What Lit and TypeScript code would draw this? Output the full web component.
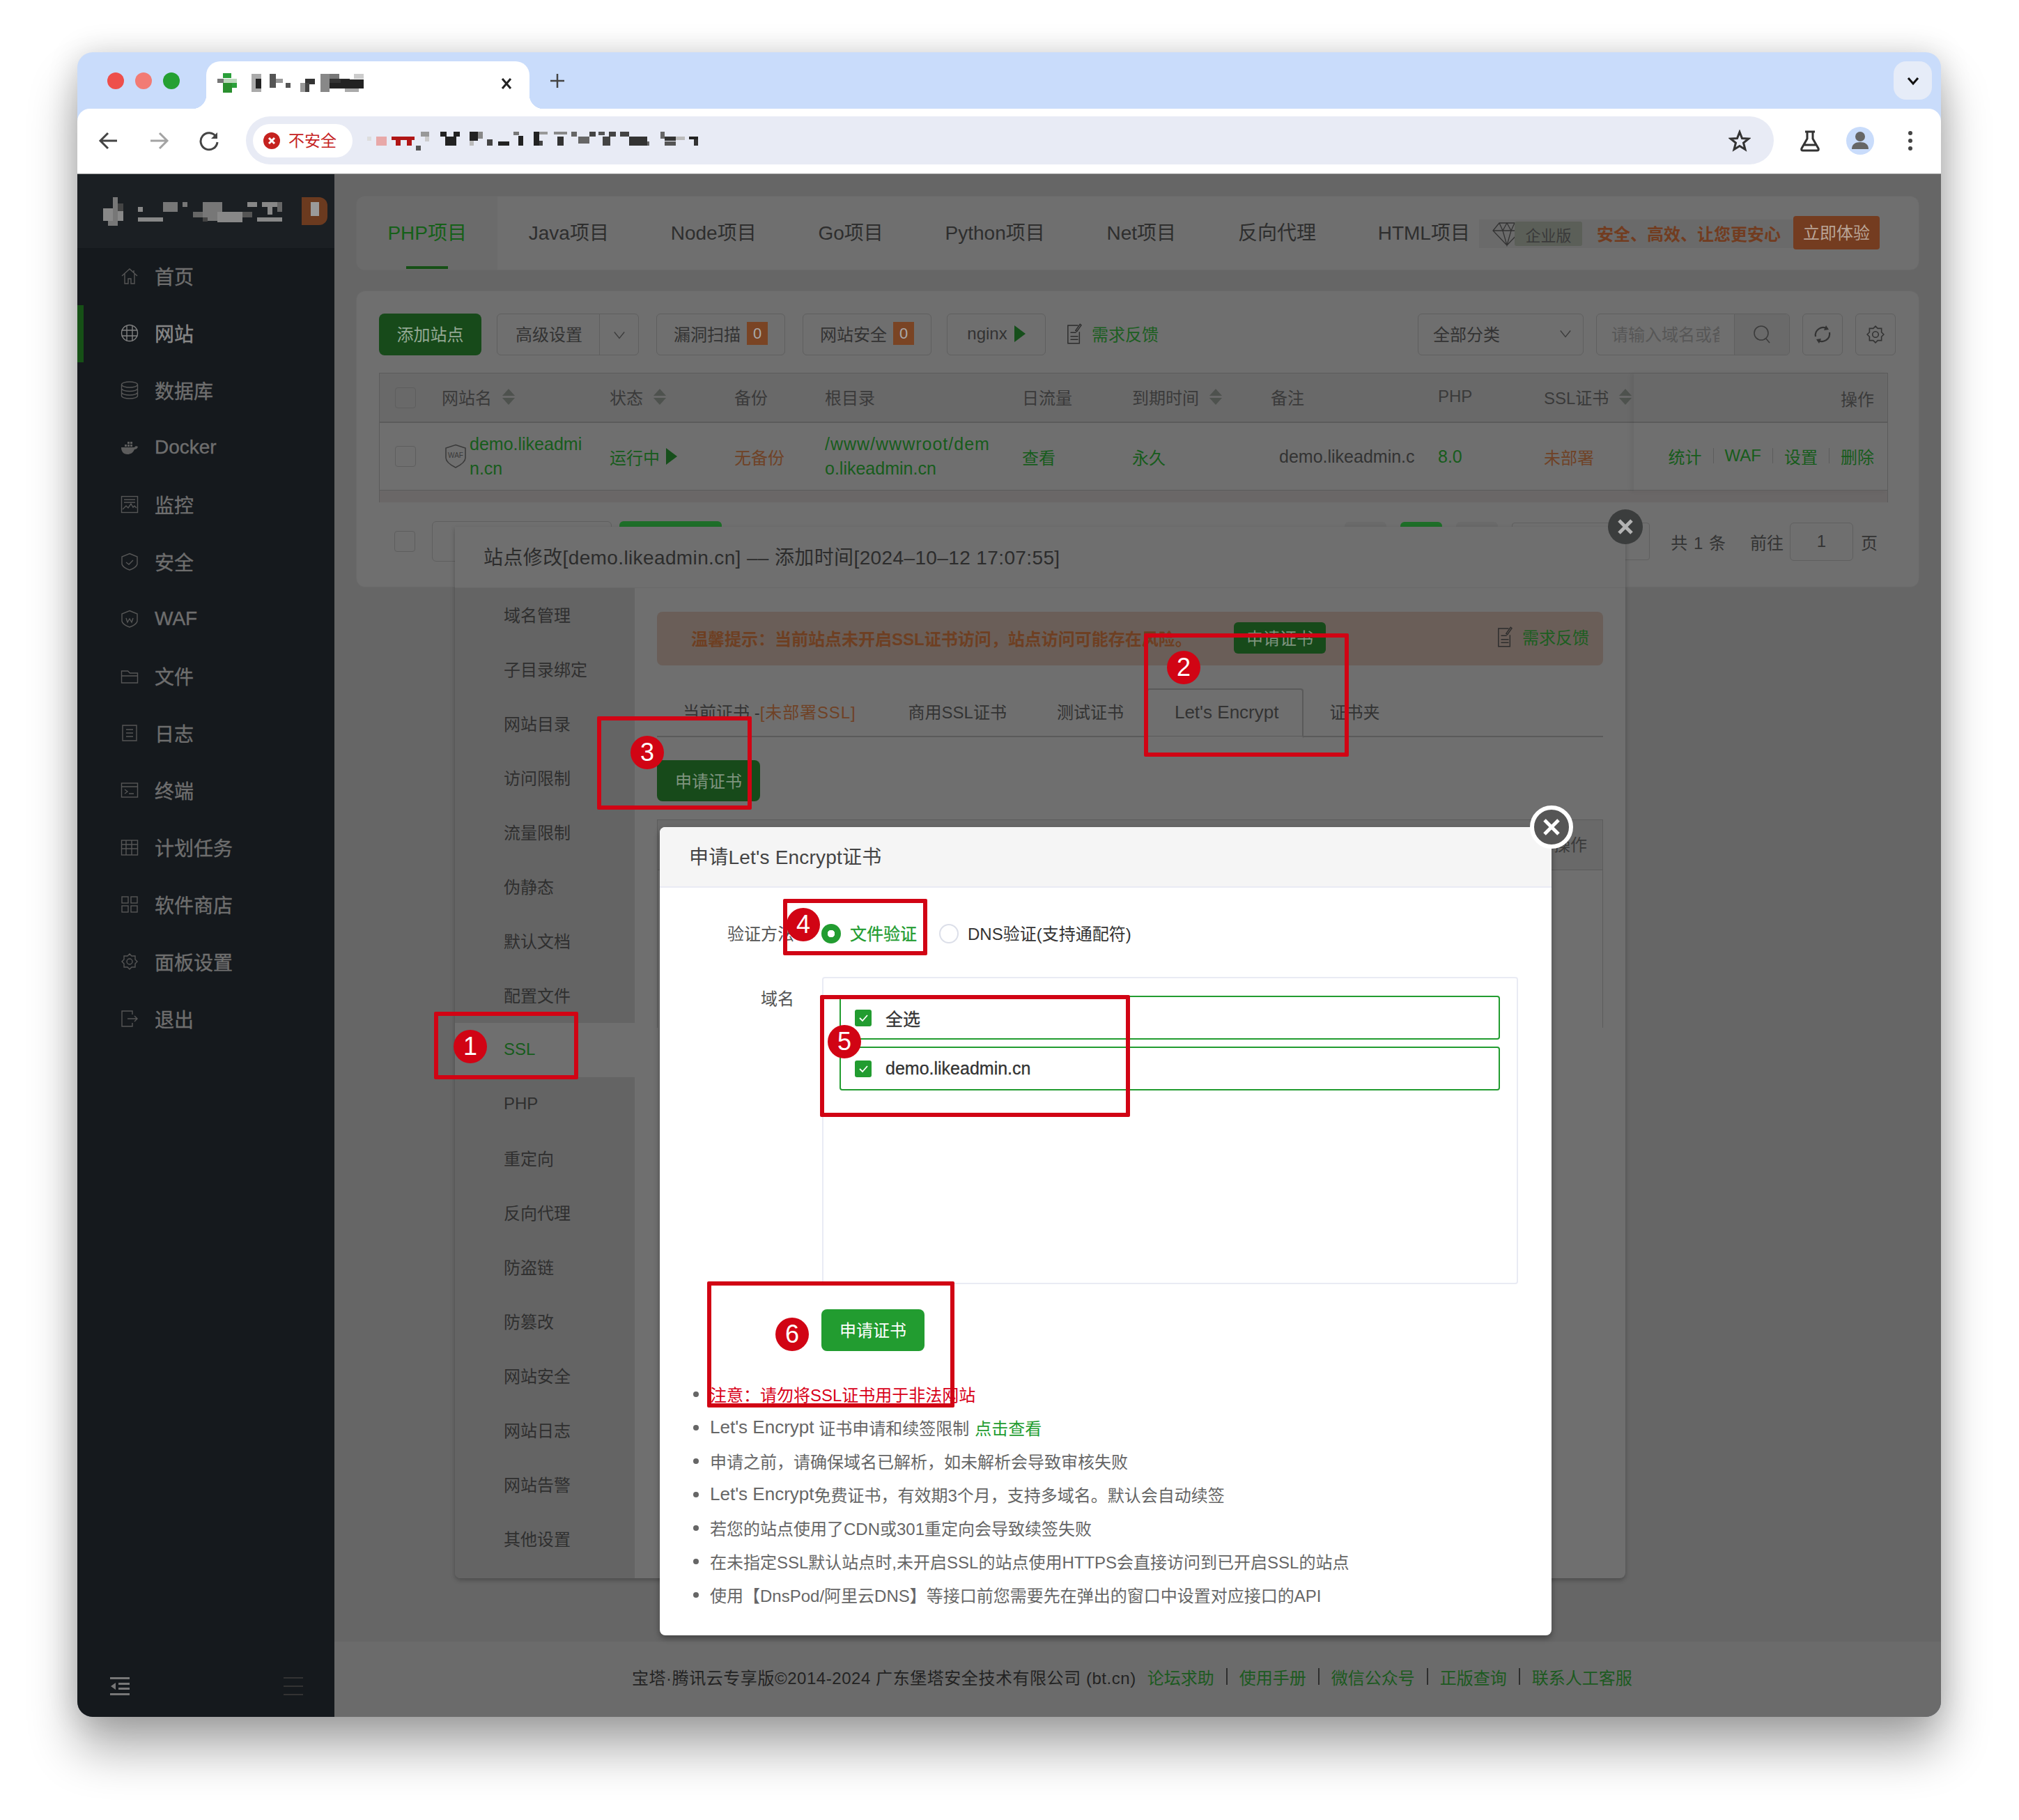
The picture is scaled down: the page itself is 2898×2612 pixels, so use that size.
import { LitElement, html, css, svg } from "lit";
import { customElement } from "lit/decorators.js";

type R = [number, number, number, number, string];
const mosaic = (vb: string, w: number, h: number, rects: R[], cls = "") => html`<svg class=${cls} width=${w} height=${h} viewBox=${vb} preserveAspectRatio="none" shape-rendering="crispEdges">${rects.map(
  (r) => svg`<rect x=${r[0]} y=${r[1]} width=${r[2]} height=${r[3]} fill=${r[4]}></rect>`
)}</svg>`;

const URL_R: R[] = [
  [670,408,10,20,"#ddd"],[690,408,24,40,"#e8a8a8"],[725,408,52,16,"#b01515"],[735,424,10,26,"#b01515"],[760,424,10,26,"#b01515"],[780,450,10,20,"#555"],
  [790,388,20,20,"#999"],[800,408,10,22,"#ccc"],[835,388,14,20,"#222"],[865,388,14,20,"#222"],[845,408,25,40,"#222"],[900,388,20,40,"#222"],[920,388,10,30,"#888"],[900,428,10,20,"#bbb"],
  [940,420,12,30,"#444"],[965,430,25,18,"#222"],[1000,388,12,15,"#777"],[1010,405,12,45,"#222"],[1045,388,12,60,"#222"],[1057,388,20,12,"#999"],[1057,428,8,20,"#444"],[1090,388,30,12,"#888"],
  [1098,410,14,40,"#333"],[1130,388,12,20,"#666"],[1145,410,25,30,"#666"],[1170,388,15,20,"#444"],[1190,388,15,15,"#555"],[1200,410,18,40,"#444"],[1215,388,15,20,"#444"],[1240,388,20,20,"#444"],
  [1260,408,40,40,"#333"],[1300,430,5,18,"#666"],[1330,388,10,30,"#666"],[1340,408,25,20,"#333"],[1365,408,20,15,"#bbb"],[1340,430,25,20,"#555"],[1395,408,20,12,"#222"],[1405,420,10,30,"#333"],
];
const TITLE_R: R[] = [
  [410,125,22,80,"#aaa"],[420,145,12,45,"#222"],[450,125,15,60,"#555"],[465,145,15,20,"#999"],[487,165,10,20,"#555"],[520,165,10,40,"#999"],[530,145,22,25,"#333"],[530,165,10,40,"#444"],
  [565,125,20,80,"#888"],[585,125,22,22,"#777"],[585,145,45,20,"#333"],[585,165,25,25,"#222"],[610,150,30,40,"#222"],[640,125,22,20,"#ccc"],[640,150,22,40,"#222"],[620,190,30,15,"#aaa"],
];
const FAV_R: R[] = [[345,125,18,20,"#2a9f3a"],[332,148,45,18,"#bcd8bc"],[332,148,15,18,"#777"],[345,168,20,42,"#2a8f2e"],[365,168,12,20,"#2aa03a"]];
const LOGO_R: R[] = [
  [135,105,80,50,"#888"],[175,60,20,115,"#777"],[155,155,40,20,"#777"],[195,85,20,30,"#444"],[275,100,20,20,"#888"],[275,140,100,18,"#888"],[375,80,60,40,"#777"],[455,80,20,20,"#777"],
  [495,120,40,20,"#666"],[535,80,80,75,"#777"],[595,120,100,40,"#888"],[695,120,40,20,"#555"],[715,80,40,20,"#888"],[775,80,60,20,"#888"],[835,80,20,40,"#666"],[795,100,20,30,"#888"],[755,140,100,18,"#888"],[535,140,20,18,"#444"],
];

const icons: Record<string, any> = {
  home: svg`<path d="M2 13 13 3l11 10M6 10v14h5v-7h4v7h5V10M19 5v4"/>`,
  globe: svg`<circle cx="13" cy="13" r="11.5"/><path d="M1.5 9h23M1.5 17h23M9 2v22M17 2v22"/>`,
  db: svg`<ellipse cx="13" cy="5" rx="11.5" ry="4"/><path d="M1.5 5v16c0 2.2 5 4 11.5 4s11.5-1.800 11.500-4V5M1.500 10.500c0 2.200 5 4 11.500 4s11.500-1.800 11.500-4M1.500 16c0 2.200 5 4 11.500 4s11.500-1.800 11.500-4"/>`,
  docker: svg`<g fill="#5c5c5c" stroke="none"><path d="M1 13h19c1-2 3-2 5-1-1 3-3 4-5 4-2 5-6 7-10 7-6 0-9-4-9-10z"/><path d="M6 9h3v3H6zM10 9h3v3h-3zM14 9h3v3h-3zM10 5h3v3h-3zM14 5h3v3h-3z"/></g>`,
  monitor: svg`<rect x="1.500" y="1.500" width="23" height="23"/><path d="M5 6h16M5 10h16M3 20l5-5 3 3 4-6 3 5 2-2 3 3"/>`,
  shield: svg`<path d="M13 1.500 24 6v10c0 4-6 7.500-11 9-5-1.500-11-5-11-9V6z"/><path d="M8 14l4 3 6-6"/>`,
  waf: svg`<path d="M13 1.500 24 6v10c0 4-6 7.500-11 9-5-1.500-11-5-11-9V6z"/><path d="M8 12l2 6 3-5 3 5 2-6"/>`,
  folder: svg`<path d="M1.500 6h9l3 3h11v14h-23zM1.500 13h23"/>`,
  log: svg`<path d="M3 2h20v22H3zM8 8h10M8 13h10M8 18h10"/>`,
  term: svg`<rect x="1.500" y="3" width="23" height="20"/><path d="M1.500 8h23M6 12l4 3-4 3M12 18h7"/>`,
  cal: svg`<rect x="1.500" y="3" width="23" height="21"/><path d="M1.500 9h23M8 3v21M16 3v21M1.500 15h23"/>`,
  apps: svg`<rect x="2" y="2" width="9" height="9"/><rect x="15" y="2" width="9" height="9"/><rect x="2" y="15" width="9" height="9"/><rect x="15" y="15" width="9" height="9"/>`,
  gear: svg`<path d="M13 2l3 3h5v5l3 3-3 3v5h-5l-3 3-3-3H5v-5l-3-3 3-3V5h5z"/><circle cx="13" cy="13" r="4"/>`,
  exit: svg`<path d="M17 7V2H2v22h15v-5M10 13h14M20 9l4 4-4 4"/>`,
};
const ic = (n: string, c = "ic") => html`<svg class=${c} viewBox="0 0 26 26" fill="none" stroke-width="1.400">${icons[n]}</svg>`;

const note = html`<svg class="note" viewBox="0 0 24 34" fill="none" stroke="#2d2d2d" stroke-width="1.600"><path d="M18 4H2v28h18V14M6 15h9M6 21h12M6 26h12"/><path d="M14 12 21 2l2 1.500-7 10z"/></svg>`;
const sort = html`<svg class="sort" viewBox="0 0 18 23"><path d="M9 0l9 10H0z" fill="#4e524e"/><path d="M9 23l9-10H0z" fill="#4e524e"/></svg>`;
const tri = html`<svg class="tri" viewBox="0 0 16 24"><path d="M0 0l16 12L0 24z" fill="#164f1b"/></svg>`;
const chev = html`<svg class="chev" viewBox="0 0 20 12" fill="none" stroke="#3c3c3c" stroke-width="1.500"><path d="M2 1l8 10 8-10"/></svg>`;

const NAV = ["首页","网站","数据库","Docker","监控","安全","WAF","文件","日志","终端","计划任务","软件商店","面板设置","退出"];
const NAVI = ["home","globe","db","docker","monitor","shield","waf","folder","log","term","cal","apps","gear","exit"];
const TABS = ["PHP项目","Java项目","Node项目","Go项目","Python项目","Net项目","反向代理","HTML项目"];
const SITE = ["域名管理","子目录绑定","网站目录","访问限制","流量限制","伪静态","默认文档","配置文件","SSL","PHP","重定向","反向代理","防盗链","防篡改","网站安全","网站日志","网站告警","其他设置"];
const BOXES = [[623,1452,207,97],[857,1028,222,134],[1124,1290,207,81],[1177,1428,445,175],[1642,909,294,177],[1015,1839,355,181]];
const DOTS: [string, number, number][] = [["1",675,1502],["3",929,1080],["4",1153,1327],["5",1212,1495],["2",1699,958],["6",1137,1915]];

@customElement("app-root")
export class AppRoot extends LitElement {
  static styles = css`
    :host { display: block; width: 2898px; height: 2612px; background: #fff; overflow: hidden; font-family: "Liberation Sans", "Noto Sans CJK SC", sans-serif; color: #333; box-sizing: border-box; padding: 75px 0 0 111px; }
    * { box-sizing: border-box; }
    .window { position: relative; width: 2675px; height: 2389px; border-radius: 22px; display: flex; flex-direction: column; background: #c9dcfb; box-shadow: 0 46px 70px rgba(0,0,0,.33), 0 0 44px rgba(0,0,0,.16); overflow: visible; }
    .strip { height: 81px; display: flex; align-items: center; padding-left: 43px; flex: none; }
    .light { width: 24px; height: 24px; border-radius: 50%; margin-right: 16px; flex: none; }
    .tab { position: relative; width: 464px; height: 68px; margin-left: 22px; align-self: flex-end; background: #fff; border-radius: 20px 20px 0 0; display: flex; align-items: center; padding: 0 0 5px 16px; flex: none; }
    .tab::before, .tab::after { content: ""; position: absolute; bottom: 0; width: 20px; height: 20px; }
    .tab::before { left: -20px; background: radial-gradient(circle at 0 0, transparent 20px, #fff 20.500px); }
    .tab::after { right: -20px; background: radial-gradient(circle at 100% 0, transparent 20px, #fff 20.500px); }
    .tab .t { margin-left: 20px; }
    .tab .x { margin-left: auto; margin-right: 24px; font-size: 0; }
    .plus { margin-left: 28px; }
    .drop { margin-left: auto; margin-right: 13px; width: 55px; height: 55px; border-radius: 18px; background: #e6ecf8; display: flex; align-items: center; justify-content: center; }
    .tools { height: 93px; flex: none; background: #fff; border-radius: 18px 18px 0 0; display: flex; align-items: center; padding: 0 0 2px 30px; }
    .tools > svg { flex: none; }
    .gap42 { margin-left: 42px; }
    .addr { margin-left: 38px; width: 2193px; height: 69px; border-radius: 35px; background: #e8ebf5; display: flex; align-items: center; padding: 0 33px 0 10px; flex: none; }
    .chip { width: 143px; height: 48px; border-radius: 24px; background: #fff; display: flex; align-items: center; gap: 12px; padding: 0 0 3px 15px; font-size: 23px; color: #c5221f; flex: none; }
    .chip svg { margin-top: 3px; flex: none; }
    .url { margin-left: 21px; }
    .star { margin-left: auto; }
    .gap37 { margin-left: 37px; }
    .body { flex: 1; display: flex; min-height: 0; background: #666; border-radius: 0 0 22px 22px; border-top: 1px solid #9a9a9a; }
    .side { width: 369px; flex: none; background: #15191d; border-radius: 0 0 0 22px; display: flex; flex-direction: column; }
    .logo { height: 106px; background: #1b1f23; display: flex; align-items: center; padding-left: 37px; flex: none; }
    .badge { margin-left: 28px; width: 37px; height: 40px; border-radius: 0 12px 12px 0; background: #6b3a1f; position: relative; display: flex; justify-content: center; align-items: flex-start; padding-top: 7px; }
    .badge i { display: block; width: 12px; height: 20px; background: #9a9a9a; }
    .item { height: 82px; display: flex; align-items: center; gap: 23px; padding: 0 0 3px 62px; font-size: 28px; color: #6e6e6e; -webkit-text-stroke: .4px #6e6e6e; flex: none; }
    .item.on { color: #868686; -webkit-text-stroke: .4px #868686; box-shadow: inset 9px 0 0 #165016; }
    .ic { width: 26px; height: 26px; stroke: #565656; flex: none; }
    .item.on .ic { stroke: #828282; }
    .foot { margin-top: auto; height: 88px; display: flex; align-items: center; justify-content: space-between; padding: 0 45px 0 47px; }
    .foot svg { width: 28px; height: 26px; }
    .main { flex: 1; min-width: 0; display: flex; flex-direction: column; padding: 32px 32px 0; }
    .card { background: #6f6f6f; border-radius: 12px; box-shadow: 0 0 0 1px #696969; }
    .tabs { height: 105px; display: flex; align-items: center; position: relative; flex: none; font-size: 28px; color: #2e2e2e; }
    .tabs .pt { position: relative; height: 100%; display: flex; align-items: center; padding: 0 44.4px 5px; flex: none; white-space: nowrap; }
    .tabs .pt.on { color: #156018; background: #6b6b6b; border-radius: 12px 0 0 12px; }
    .tabs .pt.on::after { content: ""; position: absolute; left: 71px; bottom: 1px; width: 60px; height: 4px; background: #165016; }
    .promo { position: absolute; left: 1611px; top: 33px; width: 452px; height: 41px; background: #6a6a6a; display: flex; align-items: center; }
    .dia { width: 42px; height: 36px; margin-left: 19px; flex: none; }
    .ent { margin-left: -10px; width: 97px; height: 35px; background: #5b5f58; color: #3a3a3a; font-size: 22px; display: flex; align-items: center; justify-content: center; border-radius: 3px; flex: none; }
    .safe { margin-left: 21px; font-size: 24px; font-weight: 700; color: #723c20; white-space: nowrap; padding-bottom: 3px; }
    .try { position: absolute; left: 2062px; top: 28px; width: 124px; height: 48px; border-radius: 4px; background: #743c20; color: #b9a497; font-size: 24px; display: flex; align-items: center; justify-content: center; padding-bottom: 3px; }
    .sites { margin-top: 31px; height: 424px; padding: 32px 33px 0 32px; flex: none; }
    .bar { display: flex; height: 60px; align-items: stretch; font-size: 24px; color: #333; }
    .btn { border: 1px solid #5f5f5f; border-radius: 6px; display: flex; align-items: center; justify-content: center; flex: none; white-space: nowrap; padding-bottom: 3px; }
    .prim { background: #174a1a; border: 0; color: #93a893; border-radius: 8px; }
    .bar > * + * { margin-left: 22px; }
    .w147 { width: 147px; } .w204 { width: 204px; justify-content: flex-start; padding-left: 26px; position: relative; }
    .w204 .split { position: absolute; left: 146px; top: 0; bottom: 0; border-left: 1px solid #5f5f5f; }
    .w204 .chev { position: absolute; left: 166px; top: 24px; }
    .chev { width: 18px; height: 12px; flex: none; }
    .bar > .m3 { margin-left: 25px; }
    .w185 { width: 185px; gap: 9px; }
    .num { width: 30px; height: 33px; background: #7a4424; color: #a9a9a9; font-size: 22px; display: flex; align-items: center; justify-content: center; }
    .w142 { width: 142px; gap: 10px; font-size: 24px; }
    .tri { width: 16px; height: 24px; flex: none; }
    .fb { display: flex; align-items: center; gap: 14px; color: #1c5e21; font-size: 24px; white-space: nowrap; padding-bottom: 3px; }
    .bar > .fb { margin-left: 30px; }
    .note { width: 22px; height: 32px; flex: none; }
    .bar > .sel { margin-left: auto; width: 238px; justify-content: space-between; padding: 0 16px 3px 21px; }
    .bar > .rg { margin-left: 18px; }
    .search { width: 278px; display: flex; border: 1px solid #5f5f5f; border-radius: 6px; overflow: hidden; flex: none; }
    .ph { width: 197px; overflow: hidden; white-space: nowrap; color: #575757; padding: 0 0 3px 21px; display: flex; align-items: center; }
    .ph span { display: block; width: 155px; overflow: hidden; }
    .mag { flex: 1; background: #6a6a6a; border-left: 1px solid #5f5f5f; display: flex; align-items: center; justify-content: center; }
    .mag svg, .sq svg { width: 28px; height: 30px; }
    .sq { width: 58px; padding-bottom: 0; }
    .tbl { margin-top: 25px; margin-right: 11px; height: 186px; border: 1px solid #5c5c5c; border-bottom: 0; position: relative; font-size: 24px; }
    .hd, .rw { display: grid; grid-template-columns: 89px 241px 179px 130px 283px 158px 199px 240px 152px 130px 1fr; align-items: center; }
    .hd { height: 71px; background: #696969; border-bottom: 2px solid #5b5b5b; color: #3a3a3a; padding-bottom: 3px; }
    .hd .chk { margin-top: 3px; }
    .rw { height: 97px; border-bottom: 1px solid #5b5b5b; }
    .cell { display: flex; align-items: center; white-space: nowrap; overflow: hidden; }
    .hc { gap: 15px; }
    .chk { width: 30px; height: 30px; border: 1px solid #5e5e5e; border-radius: 4px; margin-left: 22px; flex: none; }
    .sort { width: 18px; height: 23px; flex: none; }
    .scroll { height: 17px; background: #6a6767; }
    .fixed { position: absolute; right: 0; top: 0; width: 364px; height: 169px; box-shadow: -4px 0 6px rgba(0,0,0,.06); }
    .g { color: #175c1c; } .o { color: #6f4226; }
    .name { font-size: 25px; line-height: 35px; color: #175c1c; }
    .wide { letter-spacing: 1px; }
    .shd { width: 32px; height: 36px; margin: 0 4px; flex: none; }
    .acts { display: flex; justify-content: flex-end; padding: 0 19px 3px 0; align-items: center; color: #175c1c; height: 97px; margin-top: 71px; white-space: nowrap; }
    .acts i { width: 1px; height: 22px; background: #5c5c5c; margin: 0 16px; }
    .opr { position: absolute; right: 19px; top: 18px; color: #3a3a3a; }
    .pager { margin-top: 27px; height: 58px; display: flex; align-items: center; font-size: 24px; margin-right: 26px; }
    .sl { margin-left: 24px; width: 258px; height: 58px; border: 1px solid #5f5f5f; border-radius: 6px; flex: none; }
    .gb { margin-left: 11px; width: 147px; height: 58px; background: #1e6e28; border-radius: 6px; flex: none; }
    .pg { width: 60px; height: 56px; border-radius: 6px; background: #6a6a6a; margin-right: 20px; flex: none; }
    .pg.a { background: #1e6e28; }
    .pgbox { width: 198px; height: 54px; border: 1px solid #5f5f5f; border-radius: 4px; margin-right: 30px; flex: none; }
    .inp { width: 91px; height: 55px; border: 1px solid #5f5f5f; border-radius: 6px; margin: 0 11px 0 9px; display: flex; align-items: center; justify-content: center; flex: none; }
    .fill { margin-left: auto; }
    .pgt { white-space: nowrap; word-spacing: 2px; }
    .pgt + .pgt { margin-left: 35px; }
    .ftr { margin: auto -32px 0; height: 108px; background: #6b6b6b; border-radius: 0 0 22px 0; display: flex; align-items: center; padding: 0 0 8px 427px; font-size: 24px; color: #232323; white-space: nowrap; flex: none; }
    .ftr .cp { letter-spacing: .55px; }
    .ftr a { color: #1c5a20; }
    .ftr i { width: 2px; height: 24px; background: #2e2e2e; margin: 0 17px; }
    .ftr a:first-of-type { margin-left: 16px; }

    .dlg { position: absolute; left: 542px; top: 681px; width: 1680px; height: 1509px; background: #6f6f6f; border-radius: 0 0 8px 8px; box-shadow: 0 3px 6px rgba(0,0,0,.25); display: flex; flex-direction: column; }
    .dhead { height: 88px; display: flex; align-items: center; padding: 0 0 3px 41px; font-size: 28px; letter-spacing: .38px; color: #2c2c2c; border-bottom: 1px solid #686868; white-space: nowrap; flex: none; }
    .dbody { flex: 1; display: flex; min-height: 0; }
    .snav { width: 258px; background: #646464; flex: none; font-size: 24px; color: #2f2f2f; border-radius: 0 0 0 8px; }
    .snav div { height: 78px; display: flex; align-items: center; padding: 0 0 3px 70px; }
    .snav .on { background: #6f6f6f; color: #175c1c; }
    .dmain { flex: 1; padding: 34px 32px 0; min-width: 0; font-size: 24px; }
    .warn { height: 77px; border-radius: 8px; background: #6a5e58; display: flex; align-items: center; padding: 0 0 3px 49px; position: relative; color: #6e3f22; font-weight: 700; white-space: nowrap; }
    .warn .ap { position: absolute; left: 828px; top: 15px; width: 132px; height: 45px; background: #174a1a; border-radius: 6px; color: #7f947f; font-weight: 400; display: flex; align-items: center; justify-content: center; font-size: 24px; padding-bottom: 3px; }
    .warn .fb { margin-left: auto; margin-right: 20px; font-weight: 400; }
    .stabs { margin-top: 33px; height: 70px; border-bottom: 2px solid #5a5a5a; display: flex; align-items: stretch; padding-left: 37px; color: #333; white-space: nowrap; }
    .stabs span { display: flex; align-items: center; margin-right: 72px; padding-bottom: 3px; }
    .stabs span:first-child { margin-right: 75px; }
    .stabs b { font-weight: 400; letter-spacing: .9px; }
    .stabs .act { margin-left: -39px; margin-right: 37px; padding: 0 34px 3px 38px; height: 71px; font-size: 26px; border: 2px solid #5a5a5a; border-bottom: 2px solid #6f6f6f; border-radius: 4px 4px 0 0; }
    .apbtn { margin-top: 33px; width: 148px; height: 59px; border-radius: 8px; background: #174a1a; color: #7f947f; display: flex; align-items: center; justify-content: center; padding-bottom: 3px; }
    .sub { margin-top: 26px; height: 299px; border: 1px solid #5c5c5c; border-bottom: 0; }
    .subh { height: 72px; background: #696969; border-bottom: 1px solid #5b5b5b; display: flex; align-items: center; justify-content: flex-end; padding: 0 22px 5px 0; color: #3a3a3a; }

    .dlg2 { position: absolute; left: 836px; top: 1112px; width: 1280px; height: 1160px; background: #fff; border-radius: 8px; box-shadow: 0 4px 8px rgba(0,0,0,.35); font-size: 24px; color: #555; }
    .d2h { height: 87px; background: #f5f5f5; border-bottom: 2px solid #e9ebf4; border-radius: 8px 8px 0 0; display: flex; align-items: center; padding: 0 0 3px 42px; font-size: 28px; letter-spacing: .2px; color: #444; white-space: nowrap; }
    .frow { display: flex; align-items: center; height: 44px; margin-top: 44px; }
    .flabel { width: 193px; text-align: right; flex: none; color: #555; padding-bottom: 3px; }
    .radio { width: 28px; height: 28px; border-radius: 50%; flex: none; }
    .radio.sel { margin-left: 39px; background: radial-gradient(circle, #fff 0 5px, #229c30 5.500px); }
    .radio.off { margin-left: 32px; border: 2px solid #dcdfe9; background: #fff; }
    .rlabel { margin-left: 13px; white-space: nowrap; color: #333; padding-bottom: 3px; }
    .rlabel.on { color: #229c30; -webkit-text-stroke: .3px #229c30; }
    .drow { display: flex; margin-top: 40px; align-items: flex-start; }
    .drow .flabel { margin-top: 12px; }
    .dlist { margin-left: 40px; width: 999px; height: 441px; border: 2px solid #e9ebf4; border-radius: 4px; padding: 25px 23px; display: flex; flex-direction: column; gap: 10px; }
    .dit { height: 63px; width: 948px; border: 2px solid #229c30; border-radius: 4px; display: flex; align-items: center; padding-left: 20px; gap: 20px; font-size: 25px; color: #333; -webkit-text-stroke: .3px #333; flex: none; }
    .dit svg { width: 24px; height: 24px; flex: none; }
    .okb { margin: 36px 0 0 232px; width: 148px; height: 60px; border-radius: 8px; background: #229c30; color: #fff; display: flex; align-items: center; justify-content: center; padding-bottom: 3px; }
    ul { list-style: none; margin: 37px 0 0; padding: 0 0 0 72px; color: #666; }
    li { height: 48px; display: flex; align-items: center; position: relative; white-space: nowrap; }
    li::before { content: ""; position: absolute; left: -24px; top: 21px; width: 8px; height: 8px; border-radius: 50%; background: #666; }
    .le { font-size: 26px; }
    .red { color: #d8001a; } .lk { color: #229c30; margin-left: 8px; }

    .closeA { position: absolute; width: 50px; height: 50px; left: 2197px; top: 656px; }
    .closeB { position: absolute; width: 62px; height: 62px; left: 2085px; top: 1081px; }
    .box { position: absolute; border: 6px solid #d10414; border-radius: 2px; }
    .dot { position: absolute; width: 48px; height: 48px; border-radius: 50%; background: #d10414; color: #fff; font-size: 36px; display: flex; align-items: center; justify-content: center; font-family: "Liberation Sans", sans-serif; }
  `;

  render() {
    return html`<div class="window">
      <div class="strip">
        <span class="light" style="background:#ee4f4b"></span><span class="light" style="background:#f27b74"></span><span class="light" style="background:#25a032"></span>
        <div class="tab">
          ${mosaic("332 125 46 87", 29, 29, FAV_R)}
          ${mosaic("410 125 253 82", 162, 27, TITLE_R, "t")}
          <svg class="x" width="18" height="18" viewBox="0 0 18 18" stroke="#222" stroke-width="3"><path d="M3 2l12 14M15 2 3 16"/></svg>
        </div>
        <svg class="plus" width="24" height="24" viewBox="0 0 24 24" stroke="#444" stroke-width="2.500"><path d="M12 2v20M2 12h20"/></svg>
        <div class="drop"><svg width="20" height="14" viewBox="0 0 20 14" fill="none" stroke="#111" stroke-width="3"><path d="M3 3l7 8 7-8"/></svg></div>
      </div>
      <div class="tools">
        <svg width="30" height="30" viewBox="0 0 30 30" fill="none" stroke="#444" stroke-width="3"><path d="M27 15H5M14 4 3 15l11 11"/></svg>
        <svg class="gap42" width="30" height="30" viewBox="0 0 30 30" fill="none" stroke="#a3a3a3" stroke-width="3"><path d="M3 15h22M16 4l11 11-11 11"/></svg>
        <svg class="gap42" width="30" height="30" viewBox="0 0 30 30" fill="none" stroke="#444" stroke-width="3"><path d="M25 9a12 12 0 1 0 2 8"/><path d="M27 3v9H18z" fill="#444" stroke="none"/></svg>
        <div class="addr">
          <div class="chip"><svg width="24" height="24" viewBox="0 0 24 24"><circle cx="12" cy="12" r="12" fill="#c5221f"/><path d="M8 8l8 8M16 8l-8 8" stroke="#fff" stroke-width="3"/></svg>不安全</div>
          ${mosaic("670 385 745 85", 475, 28, URL_R, "url")}
          <svg class="star" width="32" height="32" viewBox="0 0 32 32" fill="none" stroke="#333" stroke-width="3"><path d="M16 3.500 19.500 12.500 29 13 21.500 19 24 28.500 16 23.500 8 28.500 10.500 19 3 13 12.500 12.500z"/></svg>
        </div>
        <svg class="gap37" width="30" height="32" viewBox="0 0 30 32" fill="none" stroke="#333" stroke-width="3"><path d="M8 3h14M11 3v10L3 27c-1 2 0 3 2 3h20c2 0 3-1 2-3l-8-14V3M7 22h16"/></svg>
        <svg class="gap37" width="40" height="40" viewBox="0 0 40 40"><circle cx="20" cy="20" r="20" fill="#c9dcfb"/><circle cx="20" cy="14" r="7" fill="#666"/><path d="M8 32c0-7 5-10 12-10s12 3 12 10z" fill="#666"/></svg>
        <svg class="gap37" width="30" height="32" viewBox="0 0 30 32" fill="#444"><circle cx="15" cy="5" r="3"/><circle cx="15" cy="16" r="3"/><circle cx="15" cy="27" r="3"/></svg>
      </div>
      <div class="body">
        <aside class="side">
          <div class="logo">${mosaic("135 60 720 115", 257, 41, LOGO_R)}<div class="badge"><i></i></div></div>
          ${NAV.map((n, i) => html`<div class="item ${i === 1 ? "on" : ""}">${ic(NAVI[i])}<span>${n}</span></div>`)}
          <div class="foot">
            <svg viewBox="0 0 28 26" fill="#777"><path d="M0 0h28v3H0zM0 23h28v3H0zM12 8h16v3H12zM12 15h16v3H12zM8 8v10L1 13z"/></svg>
            <svg viewBox="0 0 28 26" fill="#333"><path d="M0 0h28v2H0zM0 12h28v2H0zM0 24h28v2H0z"/></svg>
          </div>
        </aside>
        <main class="main">
          <div class="card tabs">
            ${TABS.map((t, i) => html`<div class="pt ${i === 0 ? "on" : ""}">${t}</div>`)}
            <div class="promo">
              <svg class="dia" viewBox="0 0 42 36" fill="none" stroke="#333" stroke-width="1.300"><path d="M10 2h22l9 11-20 21L1 13zM1 13h40M10 2l5 11 6 21 6-21 5-11M15 13l6-11 6 11"/></svg>
              <span class="ent">企业版</span><span class="safe">安全、高效、让您更安心</span>
            </div>
            <div class="try">立即体验</div>
          </div>
          <div class="card sites">
            <div class="bar">
              <div class="btn prim w147">添加站点</div>
              <div class="btn w204">高级设置<span class="split"></span>${chev}</div>
              <div class="btn w185 m3">漏洞扫描<span class="num">0</span></div>
              <div class="btn w185 m3">网站安全<span class="num">0</span></div>
              <div class="btn w142">nginx ${tri}</div>
              <div class="fb">${note}<span>需求反馈</span></div>
              <div class="btn sel">全部分类${chev}</div>
              <div class="search rg"><div class="ph"><span>请输入域名或备注</span></div><div class="mag"><svg viewBox="0 0 28 30" fill="none" stroke="#3c3c3c" stroke-width="1.600"><circle cx="13" cy="13" r="10"/><path d="M20 21l5 6"/></svg></div></div>
              <div class="btn sq rg"><svg viewBox="0 0 28 30" fill="none" stroke="#333" stroke-width="2.200"><path d="M4 18a11 11 0 0 1 17-11M24 12A11 11 0 0 1 7 23"/><path d="M19 2l4 6-7 1zM9 28l-4-6 7-1z" fill="#333" stroke="none"/></svg></div>
              <div class="btn sq rg"><svg viewBox="0 0 26 26" fill="none" stroke="#333" stroke-width="1.500">${icons.gear}</svg></div>
            </div>
            <div class="tbl">
              <div class="hd">
                <div class="cell"><span class="chk"></span></div>
                <div class="cell hc">网站名${sort}</div>
                <div class="cell hc">状态${sort}</div>
                <div class="cell">备份</div><div class="cell">根目录</div><div class="cell">日流量</div>
                <div class="cell hc">到期时间${sort}</div>
                <div class="cell">备注</div><div class="cell">PHP</div>
                <div class="cell hc">SSL证书${sort}</div>
                <div></div>
              </div>
              <div class="rw">
                <div class="cell"><span class="chk"></span></div>
                <div class="cell name"><svg class="shd" viewBox="0 0 32 36" fill="none" stroke="#3a3a3a" stroke-width="1.500"><path d="M16 1.500 30 6v14c0 6-8 11-14 14C10 31 2 26 2 20V6z"/><text x="16" y="20" font-size="10" text-anchor="middle" fill="#3a3a3a" stroke="none" font-family="Liberation Sans">WAF</text></svg><span>demo.likeadmi<br />n.cn</span></div>
                <div class="cell g">运行中<svg class="tri" style="margin-left:9px" viewBox="0 0 16 24"><path d="M0 0l16 12L0 24z" fill="#164f1b"/></svg></div>
                <div class="cell o">无备份</div>
                <div class="cell name"><span><span class="wide">/www/wwwroot/dem</span><br />o.likeadmin.cn</span></div>
                <div class="cell g">查看</div>
                <div class="cell g">永久</div>
                <div class="cell" style="padding-left:12px;font-size:25px">demo.likeadmin.c</div>
                <div class="cell g" style="font-size:25px">8.0</div>
                <div class="cell o">未部署</div>
                <div></div>
              </div>
              <div class="scroll"></div>
              <div class="fixed"><span class="opr">操作</span><div class="acts"><span>统计</span><i></i><span>WAF</span><i></i><span>设置</span><i></i><span>删除</span></div></div>
            </div>
            <div class="pager">
              <span class="chk"></span><span class="sl"></span><span class="gb"></span>
              <span class="pg fill"></span><span class="pg a"></span><span class="pg"></span>
              <span class="pgbox"></span><span class="pgt">共 1 条</span><span class="pgt">前往</span><span class="inp">1</span><span>页</span>
            </div>
          </div>
          <footer class="ftr"><span class="cp">宝塔·腾讯云专享版©2014-2024 广东堡塔安全技术有限公司 (bt.cn)</span><a>论坛求助</a><i></i><a>使用手册</a><i></i><a>微信公众号</a><i></i><a>正版查询</a><i></i><a>联系人工客服</a></footer>
        </main>
      </div>

      <section class="dlg">
        <div class="dhead">站点修改[demo.likeadmin.cn] –– 添加时间[2024–10–12 17:07:55]</div>
        <div class="dbody">
          <div class="snav">${SITE.map((s) => html`<div class=${s === "SSL" ? "on" : ""}>${s}</div>`)}</div>
          <div class="dmain">
            <div class="warn">温馨提示：当前站点未开启SSL证书访问，站点访问可能存在风险。<span class="ap">申请证书</span><div class="fb">${note}<span>需求反馈</span></div></div>
            <div class="stabs"><span>当前证书 -<b class="o">[未部署SSL]</b></span><span>商用SSL证书</span><span>测试证书</span><span class="act">Let's Encrypt</span><span>证书夹</span></div>
            <div class="apbtn">申请证书</div>
            <div class="sub"><div class="subh">操作</div></div>
          </div>
        </div>
      </section>
      <svg class="closeA" viewBox="0 0 50 50"><circle cx="25" cy="25" r="25" fill="#3b3d3d"/><path d="M16 16l18 18M34 16 16 34" stroke="#b3b3b3" stroke-width="5"/></svg>

      <section class="dlg2">
        <div class="d2h">申请Let's Encrypt证书</div>
        <div class="frow"><span class="flabel">验证方法</span><span class="radio sel"></span><span class="rlabel on">文件验证</span><span class="radio off"></span><span class="rlabel">DNS验证(支持通配符)</span></div>
        <div class="drow"><span class="flabel">域名</span>
          <div class="dlist">
            <div class="dit">${this.check()}全选</div>
            <div class="dit">${this.check()}demo.likeadmin.cn</div>
          </div>
        </div>
        <div class="okb">申请证书</div>
        <ul>
          <li class="red">注意：请勿将SSL证书用于非法网站</li>
          <li><span class="le">Let's Encrypt</span>&nbsp;证书申请和续签限制<span class="lk">点击查看</span></li>
          <li>申请之前，请确保域名已解析，如未解析会导致审核失败</li>
          <li><span class="le">Let's Encrypt</span>免费证书，有效期3个月，支持多域名。默认会自动续签</li>
          <li>若您的站点使用了CDN或301重定向会导致续签失败</li>
          <li>在未指定SSL默认站点时,未开启SSL的站点使用HTTPS会直接访问到已开启SSL的站点</li>
          <li>使用【DnsPod/阿里云DNS】等接口前您需要先在弹出的窗口中设置对应接口的API</li>
        </ul>
      </section>
      <svg class="closeB" viewBox="0 0 62 62"><circle cx="31" cy="31" r="28" fill="#555" stroke="#fff" stroke-width="6"/><path d="M21 21l20 20M41 21 21 41" stroke="#fff" stroke-width="5"/></svg>

      ${BOXES.map((b) => html`<div class="box" style="left:${b[0] - 111}px;top:${b[1] - 75}px;width:${b[2]}px;height:${b[3]}px"></div>`)}
      ${DOTS.map((d) => html`<div class="dot" style="left:${d[1] - 24 - 111}px;top:${d[2] - 24 - 75}px">${d[0]}</div>`)}
    </div>`;
  }

  check() {
    return html`<svg viewBox="0 0 24 24"><rect width="24" height="24" rx="3" fill="#229c30"/><path d="M7 12l4 4 7-8" fill="none" stroke="#fff" stroke-width="1.800"/></svg>`;
  }
}
